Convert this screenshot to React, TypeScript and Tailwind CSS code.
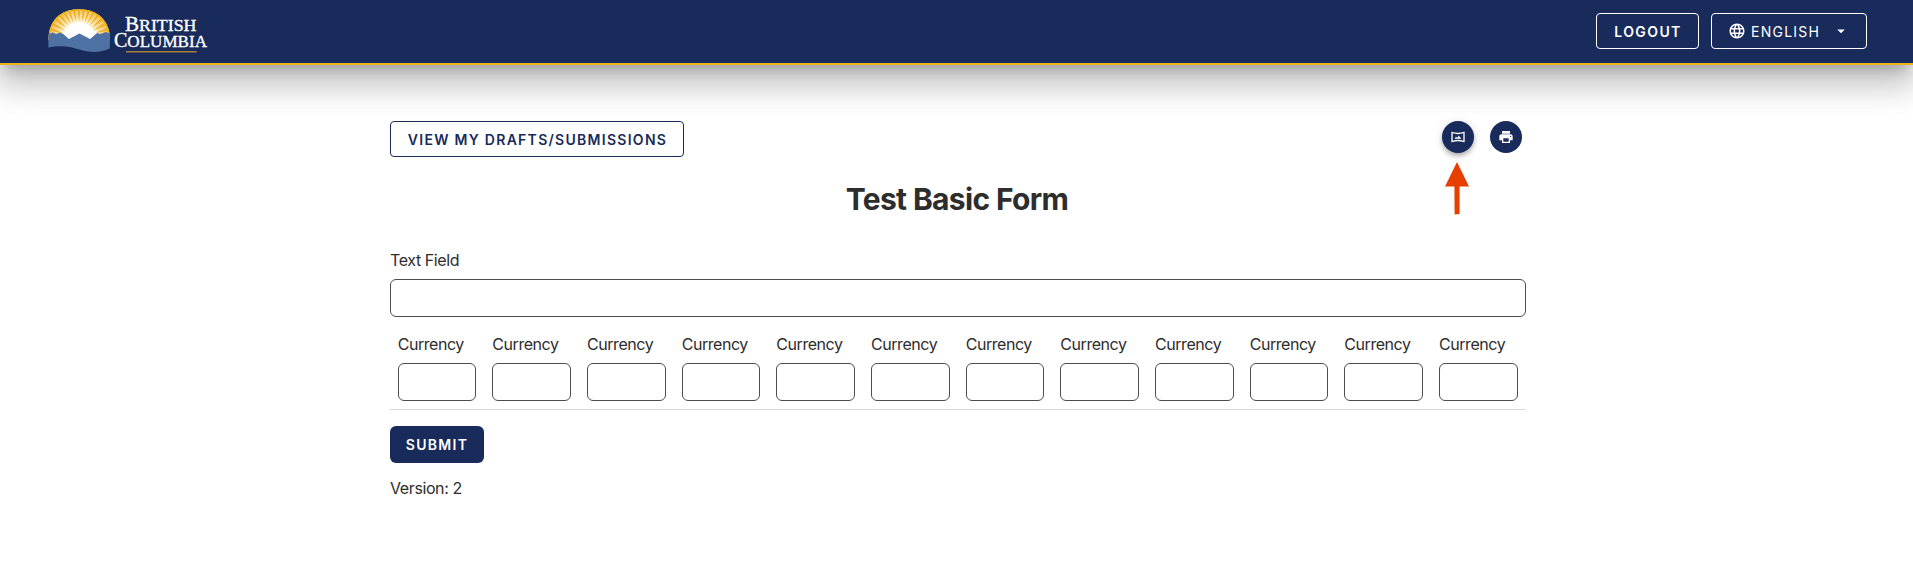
import React from "react";

const RAYS = [-84, -73, -62, -51, -40, -30, -20, -10, 0, 10, 20, 30, 40, 51, 62, 73, 84];

function Logo() {
  return (
    <svg width="164" height="50" viewBox="46 6 164 50" className="block" role="img" aria-label="British Columbia">
      <defs>
        <clipPath id="sun">
          <path d="M48.5 40C48.5 20 61 9.3 79 9.3S110 20 110 40Z" />
        </clipPath>
        <radialGradient id="glow" gradientUnits="userSpaceOnUse" cx="79" cy="38" r="30">
          <stop offset="0.5" stopColor="#fff" />
          <stop offset="0.68" stopColor="#fae3ac" />
          <stop offset="1" stopColor="#f4c35a" />
        </radialGradient>
      </defs>
      <g clipPath="url(#sun)">
        <rect x="46" y="6" width="68" height="40" fill="url(#glow)" />
        {RAYS.map((a) => (
          <path key={a} d="M79 22.5L77.2 4H80.8Z" fill="#efb021" transform={`rotate(${a} 79 38)`} />
        ))}
        <path d="M48.5 40C48.5 20 61 9.3 79 9.3S110 20 110 40" fill="none" stroke="#f0b120" strokeWidth="2.4" />
      </g>
      <path
        d="M48.5 34L53 32.5L56 34L60 32.5L64 34.5L70 40L73 37L75 37.5L79.5 33.5L84 37.5L86 37L89.5 39.5L97 33L100 34L106 32L110 33.5L109.8 48.5C102 52 93 53 83 50.5C72 47.5 64 44.5 48.3 47.5Z"
        fill="#4f72a5"
      />
      <path d="M63 33.2L70 39.2L79.5 33.4L89.5 39L97.5 32L88 29H71Z" fill="#fff" />
      <path d="M67 40L79.5 33.4L92 40Z" fill="#4f72a5" />
      <g fill="#fff" stroke="#fff" strokeWidth="0.35" fontFamily="'Liberation Serif', serif">
        <text x="125" y="31" fontSize="20" textLength="71.5" lengthAdjust="spacingAndGlyphs">
          B<tspan fontSize="17">RITISH</tspan>
        </text>
        <text x="114" y="46.8" fontSize="20" textLength="93" lengthAdjust="spacingAndGlyphs">
          C<tspan fontSize="17">OLUMBIA</tspan>
        </text>
      </g>
      <path d="M126 51.8H196.5" stroke="#a5843f" strokeWidth="1.4" />
    </svg>
  );
}

function Header() {
  return (
    <header className="flex h-[65px] items-start border-b-2 border-[#efb220] bg-[#182b5a] pl-[46px] pr-[46px] shadow-[0_10px_13px_-6px_rgba(0,0,0,.2),0_20px_31px_3px_rgba(0,0,0,.14),0_8px_38px_7px_rgba(0,0,0,.12)]">
      <div className="mt-1.5">
        <Logo />
      </div>
      <div className="mt-[13px] ml-auto flex gap-3 text-sm text-white">
        <button className="flex h-9 w-[103px] items-center justify-center rounded border border-white pt-0.5 pl-px font-semibold tracking-[1.4px]">
          LOGOUT
        </button>
        <button className="flex h-9 w-[156px] items-center rounded border border-white pl-[16px] tracking-[1.25px]">
          <svg viewBox="0 0 24 24" className="size-[18px]" fill="#fff">
            <path d="M11.99 2C6.47 2 2 6.48 2 12s4.47 10 9.99 10C17.52 22 22 17.52 22 12S17.52 2 11.99 2zm6.93 6h-2.95a15.65 15.65 0 0 0-1.38-3.56A8.03 8.03 0 0 1 18.92 8zM12 4.04c.83 1.2 1.48 2.53 1.91 3.96h-3.82c.43-1.43 1.08-2.76 1.91-3.96zM4.26 14C4.1 13.36 4 12.69 4 12s.1-1.36.26-2h3.38c-.08.66-.14 1.32-.14 2s.06 1.34.14 2H4.26zm.82 2h2.95c.32 1.25.78 2.45 1.38 3.56A7.99 7.99 0 0 1 5.08 16zm2.95-8H5.08a7.99 7.99 0 0 1 4.33-3.56A15.65 15.65 0 0 0 8.03 8zM12 19.96c-.83-1.2-1.48-2.53-1.91-3.96h3.82c-.43 1.43-1.08 2.76-1.91 3.96zM14.34 14H9.66c-.09-.66-.16-1.32-.16-2s.07-1.35.16-2h4.68c.09.65.16 1.32.16 2s-.07 1.34-.16 2zm.25 5.56c.6-1.11 1.06-2.31 1.38-3.56h2.95a8.03 8.03 0 0 1-4.33 3.56zM16.36 14c.08-.66.14-1.32.14-2s-.06-1.34-.14-2h3.38c.16.64.26 1.31.26 2s-.1 1.36-.26 2h-3.38z" />
          </svg>
          <span className="ml-[5px] pt-0.5">ENGLISH</span>
          <svg viewBox="0 0 24 24" className="ml-[12px] size-[18px]" fill="#fff">
            <path d="M7 10l5 5 5-5z" />
          </svg>
        </button>
      </div>
    </header>
  );
}

function Toolbar() {
  return (
    <div className="flex h-9 items-start">
      <button className="flex h-9 w-[294px] items-center justify-center rounded border border-[#182b5a] pt-0.5 pl-px text-sm font-semibold tracking-[1.28px] text-[#182b5a]">
        VIEW MY DRAFTS/SUBMISSIONS
      </button>
      <div className="mr-1 ml-auto flex gap-4">
        <div className="relative">
          <button className="flex size-8 items-center justify-center rounded-full bg-[#182b5a] shadow-[0_2px_4px_-1px_rgba(0,0,0,.2),0_4px_5px_rgba(0,0,0,.14),0_1px_10px_rgba(0,0,0,.12)]">
            <svg viewBox="0 0 24 24" className="size-4" fill="#fff">
              <path d="M20 6.54v10.91c-2.6-.77-5.28-1.16-8-1.16s-5.4.39-8 1.16V6.54c2.6.77 5.28 1.16 8 1.16 2.72.01 5.4-.38 8-1.16M21.43 4c-.1 0-.2.02-.31.06C18.18 5.16 15.09 5.7 12 5.7s-6.18-.55-9.12-1.64A.94.94 0 0 0 2.57 4c-.34 0-.57.23-.57.63v14.75c0 .39.23.62.57.62.1 0 .2-.02.31-.06 2.94-1.1 6.03-1.64 9.12-1.64s6.18.55 9.12 1.64c.11.04.21.06.31.06.33 0 .57-.23.57-.63V4.63c0-.4-.24-.63-.57-.63z" />
              <path d="M6.8 14.7L9 11.8L10.7 13.2L13.2 10L17.2 14.7Z" />
            </svg>
          </button>
          <svg viewBox="0 0 24 53" className="absolute top-[41px] left-[2.5px] h-[53px] w-6" fill="#e63f00">
            <path d="M12 0L24 24.5H14.6V52L9.6 52.4L9.4 24.5H0Z" />
          </svg>
        </div>
        <button className="flex size-8 items-center justify-center rounded-full bg-[#182b5a]">
          <svg viewBox="0 0 24 24" className="size-4" fill="#fff">
            <path d="M18 3H6v4h12M19 12a1 1 0 1 1 0-2 1 1 0 0 1 0 2M16 19H8v-5h8M19 8H5a3 3 0 0 0-3 3v6h4v4h12v-4h4v-6a3 3 0 0 0-3-3z" fillRule="evenodd" />
          </svg>
        </button>
      </div>
    </div>
  );
}

export default function App() {
  return (
    <div className="h-[568px] overflow-hidden bg-white font-['Inter',sans-serif] text-[#2d2d2d]">
      <Header />
      <main className="mt-14 ml-[390px] w-[1136px]">
        <Toolbar />
        <h1 className="mt-[22px] pr-0.5 text-center text-[30px] leading-[40px] font-bold tracking-[-0.65px]">Test Basic Form</h1>
        <label className="mt-[29px] block h-6 text-base leading-6 tracking-[-0.4px]">Text Field</label>
        <input className="mt-[7px] block h-[38px] w-full rounded-md border border-[#4d4d4d]" />
        <div className="mt-[15px] grid grid-cols-12 border-b border-[#d9d9d9] pb-2">
          {Array.from({ length: 12 }, (_, i) => (
            <div key={i} className="pr-[8.3px] pl-[7.7px]">
              <label className="block h-6 leading-6 tracking-[-0.45px]">Currency</label>
              <input className="mt-[7px] block h-[38px] w-full rounded-md border border-[#4d4d4d]" />
            </div>
          ))}
        </div>
        <button className="mt-4 flex h-[37px] w-[94px] items-center justify-center rounded-md bg-[#182b5a] pt-px text-sm font-semibold tracking-[1.3px] text-white">
          SUBMIT
        </button>
        <p className="mt-[13px] leading-6 tracking-[-0.4px]">Version: 2</p>
      </main>
    </div>
  );
}
